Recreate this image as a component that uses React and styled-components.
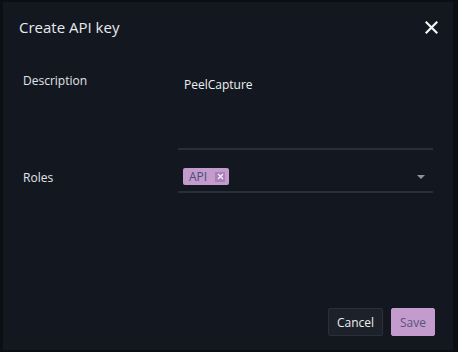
import React from "react";
import styled, { createGlobalStyle } from "styled-components";

const Global = createGlobalStyle`
  html, body {
    margin: 0;
    padding: 0;
    background: #0b0e12;
  }
  body {
    font-family: "Open Sans", "Noto Sans", sans-serif;
  }
`;

const Frame = styled.div`
  width: 458px;
  height: 352px;
  box-sizing: border-box;
  padding: 2px 5px 2px 3px;
  background: #0b0e12;
`;

const Dialog = styled.div`
  height: 100%;
  background: #131820;
  display: flex;
  flex-direction: column;
  color: #e6e8eb;
`;

const Header = styled.div`
  display: flex;
  align-items: center;
  justify-content: space-between;
  height: 50px;
  padding: 0 14px 0 16px;
`;

const Title = styled.h2`
  margin: 0;
  font-size: 15px;
  font-weight: 400;
  color: #e8eaee;
`;

const CloseButton = styled.button`
  background: none;
  border: 0;
  padding: 0;
  width: 16px;
  height: 16px;
  display: flex;
  align-items: center;
  justify-content: center;
  cursor: pointer;
`;

const Body = styled.div`
  flex: 1;
  padding: 20px 20px 0 20px;
  display: flex;
  flex-direction: column;
`;

const Row = styled.div`
  display: grid;
  grid-template-columns: 155px 1fr;
  align-items: ${(p) => p.$align || "start"};
  margin-bottom: ${(p) => p.$gap || 0}px;
`;

const Label = styled.div`
  font-size: 12px;
  line-height: 17px;
  font-weight: 500;
  color: #e3e5e9;
  padding-bottom: ${(p) => p.$bottom || 0}px;
`;

const TextArea = styled.div`
  height: 78px;
  border-bottom: 2px solid #2a2e36;
  padding: 4px 6px 0;
  font-size: 12px;
  line-height: 17px;
  color: #eef0f3;
  box-sizing: border-box;
`;

const Select = styled.div`
  height: 27px;
  border-bottom: 2px solid #2a2e36;
  display: flex;
  align-items: center;
  justify-content: space-between;
  padding: 0 8px 4px 5px;
  box-sizing: border-box;
`;

const Chip = styled.span`
  display: inline-flex;
  align-items: center;
  gap: 8px;
  height: 17px;
  padding: 0 4px 0 6px;
  background: #c39ccd;
  border-radius: 2px;
  color: #4b4c78;
  font-size: 12px;
`;

const ChipClose = styled.span`
  width: 10px;
  height: 10px;
  background: #a980b5;
  display: flex;
  align-items: center;
  justify-content: center;
`;

const Caret = styled.span`
  width: 0;
  height: 0;
  border-left: 4px solid transparent;
  border-right: 4px solid transparent;
  border-top: 4px solid #8f9399;
`;

const Footer = styled.div`
  display: flex;
  justify-content: flex-end;
  gap: 8px;
  padding: 0 18px 14px 0;
`;

const Button = styled.button`
  height: 28px;
  padding: 0 8px;
  font-family: inherit;
  font-size: 12px;
  border-radius: 2px;
  border: 1px solid ${(p) => (p.$primary ? "#c39ccd" : "#2b2f37")};
  background: ${(p) => (p.$primary ? "#c39ccd" : "#1d2129")};
  color: ${(p) => (p.$primary ? "#5b5282" : "#eceef1")};
  cursor: pointer;
`;

export default function App() {
  return (
    <Frame>
      <Global />
      <Dialog>
        <Header>
          <Title>Create API key</Title>
          <CloseButton aria-label="Close">
            <svg width="13" height="13" viewBox="0 0 13 13">
              <path d="M1.5 1.5 L11.5 11.5 M11.5 1.5 L1.5 11.5" stroke="#f2f3f5" strokeWidth="2.2" strokeLinecap="square" />
            </svg>
          </CloseButton>
        </Header>
        <Body>
          <Row $gap={16}>
            <Label>Description</Label>
            <TextArea>PeelCapture</TextArea>
          </Row>
          <Row $align="center">
            <Label $bottom={4}>Roles</Label>
            <Select>
              <Chip>
                API
                <ChipClose>
                  <svg width="7" height="7" viewBox="0 0 7 7">
                    <path d="M1 1 L6 6 M6 1 L1 6" stroke="#f4eef6" strokeWidth="1.4" />
                  </svg>
                </ChipClose>
              </Chip>
              <Caret />
            </Select>
          </Row>
        </Body>
        <Footer>
          <Button>Cancel</Button>
          <Button $primary>Save</Button>
        </Footer>
      </Dialog>
    </Frame>
  );
}
